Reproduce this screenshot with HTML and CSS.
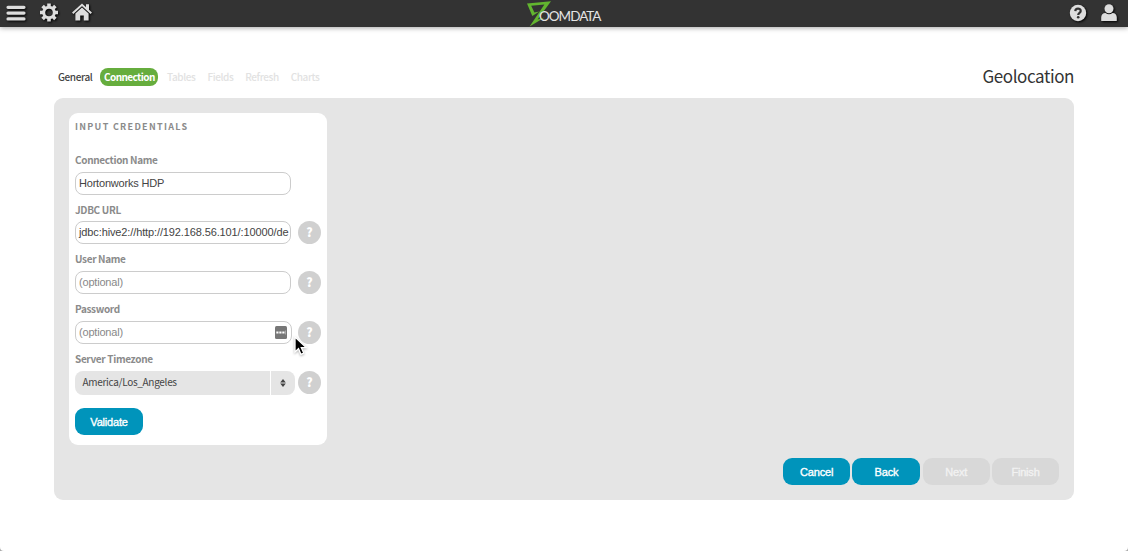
FILE: index.html
```html
<!DOCTYPE html>
<html lang="en">
<head>
<meta charset="utf-8">
<title>Zoomdata - Geolocation</title>
<link rel="stylesheet" href="styles.css">
</head>
<body>
<header class="topbar">
  <nav class="topbar-left">
    <svg class="icon" width="20" height="20" viewBox="0 0 20 20"><path d="M2 4.3h16M2 10.1h16M2 15.9h16" stroke="#ddd" stroke-width="3.2" stroke-linecap="round"/></svg>
    <svg class="icon" width="20" height="20" viewBox="0 0 20 20"><g fill="none" stroke="#ddd"><circle cx="10" cy="9.5" r="5.3" stroke-width="3"/><path d="M10 .5v3M10 15.5v3M1 9.5h3M16 9.5h3M3.6 3.1l2.2 2.2M14.2 13.7l2.2 2.2M3.6 15.9l2.2-2.2M14.2 5.3l2.2-2.2" stroke-width="3.6"/></g></svg>
    <svg class="icon" width="20" height="20" viewBox="0 0 20 20"><path d="M.7 10.2L10 1.8l9.3 8.4" fill="none" stroke="#ddd" stroke-width="2"/><path d="M14 1.2h3v6.4l-3-2.7zM10 4.6l6.6 6V17.6h-4.8v-5H8.2v5H3.4v-7z" fill="#ddd"/></svg>
  </nav>
  <div class="logo">
    <svg class="logo-mark" width="28" height="27" viewBox="0 0 28 27"><path d="M1 3.6L25 1.2 11.6 19.6 18.5 17.4 3.6 26.5 18.4 4.4 5.2 5.8 8.4 12.6l5-1L6.3 16z" fill="#62b52f"/></svg>
    <span class="logo-text">OOMDATA</span>
  </div>
  <nav class="topbar-right">
    <svg class="icon" width="18" height="18" viewBox="0 0 18 18"><circle cx="9" cy="9" r="8.2" fill="#ddd"/><path d="M6.3 7.1C6.4 3.9 11.7 3.9 11.7 6.9c0 2-2.5 1.8-2.5 4" fill="none" stroke="#333" stroke-width="2.2"/><circle cx="9.2" cy="13.3" r="1.3" fill="#333"/></svg>
    <svg class="icon" width="18" height="20" viewBox="0 0 18 20"><circle cx="9" cy="5.8" r="4.5" fill="#ddd"/><path d="M1.2 17.5V14.6c0-2.8 1.6-4.6 4.3-4.6 2 1.7 5 1.7 7 0 2.7 0 4.3 1.8 4.3 4.6v2.9q0 .6-.6.6H1.8q-.6 0-.6-.6z" fill="#ddd"/></svg>
  </nav>
</header>
<main class="page">
  <div class="page-head">
    <ol class="steps">
      <li class="step step-done">General</li>
      <li class="step step-current">Connection</li>
      <li class="step">Tables</li>
      <li class="step">Fields</li>
      <li class="step">Refresh</li>
      <li class="step">Charts</li>
    </ol>
    <h1 class="source-name">Geolocation</h1>
  </div>
  <section class="panel">
    <form class="card">
      <h2 class="card-title">Input Credentials</h2>
      <div class="field field-first">
        <label class="label">Connection Name</label>
        <div class="row"><div class="input"><span class="value">Hortonworks HDP</span></div></div>
      </div>
      <div class="field">
        <label class="label label-url">JDBC URL</label>
        <div class="row"><div class="input"><span class="value value-url">jdbc:hive2://http://192.168.56.101/:10000/de</span></div><span class="help">?</span></div>
      </div>
      <div class="field">
        <label class="label">User Name</label>
        <div class="row"><div class="input"><span class="value hint">(optional)</span></div><span class="help">?</span></div>
      </div>
      <div class="field">
        <label class="label">Password</label>
        <div class="row"><div class="input input-password"><span class="value hint">(optional)</span><svg class="keys" width="12" height="13" viewBox="0 0 12 13"><rect width="12" height="13" rx="1.5" fill="#777"/><path d="M1.3 6.5h2.2M4.3 6.5h2.2M7.3 6.5h2.2" stroke="#fff" stroke-width="2.2"/><path d="M10.5 4.5v4" stroke="#bbb" stroke-width=".7"/></svg></div><span class="help">?</span></div>
      </div>
      <div class="field">
        <label class="label">Server Timezone</label>
        <div class="row"><div class="select"><span class="select-value">America/Los_Angeles</span><span class="select-arrow"><svg width="6" height="8" viewBox="0 0 6 8"><path d="M3 0l2.8 3.5H.2zM3 8L.2 4.5h5.6z" fill="#444"/></svg></span></div><span class="help">?</span></div>
      </div>
      <button class="button validate" type="button">Validate</button>
    </form>
    <div class="actions">
      <button class="button" type="button">Cancel</button>
      <button class="button button-back" type="button">Back</button>
      <button class="button" type="button" disabled>Next</button>
      <button class="button" type="button" disabled>Finish</button>
    </div>
  </section>
</main>
<svg class="pointer" width="16" height="22" viewBox="0 0 16 22"><path d="M2 2v15l3.5-3.3 2.4 5.6 2.8-1.2-2.4-5.5h4.9z" fill="#000" stroke="#fff" stroke-width="1.3"/></svg>
<svg class="corner corner-left" width="4" height="4" viewBox="0 0 4 4"><path d="M0 0q0 4 4 4H0z" fill="#aaa"/></svg>
<svg class="corner corner-right" width="4" height="4" viewBox="0 0 4 4"><path d="M4 0q0 4-4 4h4z" fill="#aaa"/></svg>
</body>
</html>
```
FILE: styles.css
```css
* { box-sizing: border-box; }
body {
  position: relative;
  margin: 0;
  height: 551px;
  overflow: hidden;
  background: #fff;
  font-family: "Noto Sans CJK SC", "Open Sans", sans-serif;
  color: #444;
}
.topbar {
  height: 27px;
  background: #333;
  box-shadow: 0 1px 5px rgba(0, 0, 0, .35);
  display: grid;
  grid-template-columns: 1fr auto 1fr;
}
.topbar-left, .topbar-right { display: flex; align-items: center; height: 25px; }
.topbar-left { padding-left: 6px; gap: 13px; }
.topbar-right { justify-content: flex-end; padding-right: 10px; gap: 13px; }
.icon { display: block; filter: drop-shadow(1px 1px 1px #000); }
.logo { display: flex; width: 74px; }
.logo-mark { flex: none; margin-left: -1px; }
.logo-text {
  margin-left: -15px;
  font: 13.5px/32px Lato, sans-serif;
  letter-spacing: -1px;
  color: #e4e4e4;
}
.page { padding: 32px 54px 0 54px; }
.page-head {
  height: 39px;
  display: flex;
  justify-content: space-between;
}
.steps {
  list-style: none;
  margin: 9px 0 0;
  padding: 0;
  display: flex;
  font-size: 10px;
  line-height: 17px;
  height: 18px;
  letter-spacing: -.4px;
}
.step { padding: 0 4px; margin-right: 4px; border-radius: 8px; color: #e2e2e2; font-weight: 500; white-space: nowrap; }
.step-done { width: 42px; color: #444; }
.step-current { background: #66ad3d; color: #fff; font-weight: 700; letter-spacing: -.58px; width: 58px; margin-right: 5px; }
.source-name { margin: 0; font-size: 17px; line-height: 33px; font-weight: 400; letter-spacing: -.42px; color: #333; }
.panel {
  width: 1020px;
  height: 402px;
  padding: 15px;
  border-radius: 9px;
  background: #e5e5e5;
  display: flex;
  justify-content: space-between;
}
.card {
  width: 258px;
  height: 332px;
  padding: 5px 6px;
  border-radius: 9px;
  background: #fff;
}
.card-title {
  margin: 0;
  font-size: 9px;
  line-height: 18px;
  letter-spacing: 1.3px;
  text-transform: uppercase;
  color: #8b8b8b;
}
.field { height: 50px; }
.field-first { margin-top: 15px; height: 49px; }
.label { display: block; font-size: 10px; line-height: 17px; height: 21px; font-weight: 700; letter-spacing: -.34px; color: #8b8b8b; }
.label-url { line-height: 19px; }
.row { display: flex; gap: 7px; }
.input {
  width: 216px;
  height: 23px;
  padding: 0 2px 0 3px;
  border: 1px solid #ccc;
  border-radius: 8px;
  display: flex;
  align-items: center;
}
.value { font: 11px/21px "Liberation Sans", sans-serif; letter-spacing: -.2px; color: #444; white-space: nowrap; }
.value-url { letter-spacing: -.12px; }
.hint { color: #888; }
.input-password { width: 217px; justify-content: space-between; padding-right: 4px; }
.input-password + .help { margin-left: -1px; }
.help {
  width: 23px;
  height: 23px;
  border-radius: 50%;
  background: #d0d0d0;
  color: #fff;
  font-size: 12px;
  font-weight: 900;
  line-height: 22px;
  text-align: center;
}
.select { width: 220px; height: 24px; display: flex; gap: 1px; }
.select + .help { margin-left: -4px; }
.select-value {
  width: 195px;
  padding-left: 7.5px;
  border-radius: 8px 0 0 8px;
  background: #e5e5e5;
  font-size: 10px;
  line-height: 22px;
  letter-spacing: -.3px;
}
.select-arrow {
  width: 24px;
  border-radius: 0 8px 8px 0;
  background: #e5e5e5;
  display: flex;
  align-items: center;
  justify-content: center;
}
.button {
  width: 67px;
  height: 27px;
  padding: 0;
  border: 0;
  border-radius: 9px;
  background: #0094bb;
  color: #fff;
  font: 11px "Liberation Sans", sans-serif;
  letter-spacing: -.2px;
  -webkit-text-stroke: .35px currentColor;
}
.button:disabled { background: #d8d8d8; color: #f2f2f2; }
.validate { width: 68px; margin-top: 8px; }
.button-back { width: 68px; }
.actions { display: flex; gap: 2.3px; align-self: flex-end; }
.pointer { position: absolute; left: 293px; top: 335px; filter: drop-shadow(0 1px 1px rgba(0, 0, 0, .3)); }
.corner { position: absolute; bottom: 0; }
.corner-left { left: 0; }
.corner-right { right: 0; }
```
